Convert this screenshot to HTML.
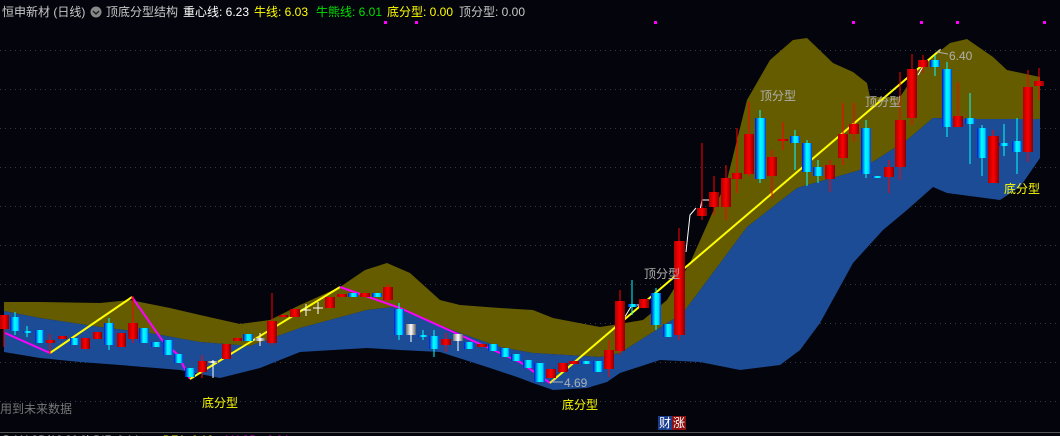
<!DOCTYPE html><html><head><meta charset="utf-8"><style>
html,body{margin:0;padding:0;background:#04040c;width:1060px;height:436px;overflow:hidden}
svg{display:block}
text{font-family:"Liberation Sans","Noto Sans CJK SC",sans-serif}
</style></head><body>
<svg width="1060" height="436" viewBox="0 0 1060 436" xmlns="http://www.w3.org/2000/svg">
<defs>
<linearGradient id="r" x1="0" x2="1"><stop offset="0" stop-color="#b00000"/><stop offset=".5" stop-color="#ff0000"/><stop offset="1" stop-color="#8a0000"/></linearGradient>
<linearGradient id="c" x1="0" x2="1"><stop offset="0" stop-color="#0010d0"/><stop offset=".45" stop-color="#00ffff"/><stop offset=".75" stop-color="#00e0ff"/><stop offset="1" stop-color="#0030e0"/></linearGradient>
<linearGradient id="w" x1="0" x2="1"><stop offset="0" stop-color="#707070"/><stop offset=".5" stop-color="#ffffff"/><stop offset="1" stop-color="#606060"/></linearGradient>
</defs>
<rect width="1060" height="436" fill="#04040c"/>
<!-- grid -->
<g stroke="#3a3a44" stroke-dasharray="1 4" stroke-width="1">
<line x1="0" y1="50.5" x2="1060" y2="50.5"/><line x1="0" y1="89.5" x2="1060" y2="89.5"/><line x1="0" y1="128.5" x2="1060" y2="128.5"/><line x1="0" y1="167.5" x2="1060" y2="167.5"/><line x1="0" y1="206.5" x2="1060" y2="206.5"/><line x1="0" y1="245.5" x2="1060" y2="245.5"/><line x1="0" y1="284.5" x2="1060" y2="284.5"/><line x1="0" y1="323.5" x2="1060" y2="323.5"/><line x1="0" y1="362.5" x2="1060" y2="362.5"/><line x1="0" y1="401.5" x2="1060" y2="401.5"/>
</g>
<!-- olive band -->
<polygon fill="#655c00" points="4,302 40,302 100,303 130,300 170,308 200,315 240,324 270,320 300,305 340,287 365,270 387,263 410,273 440,300 460,305 500,308 533,310 553,318 600,327 613,325 643,320 667,300 690,263 727,180 747,100 770,60 793,40 807,38 833,63 853,72 867,83 870,97 900,97 920,67 950,43 967,39 993,57 1007,70 1040,77 1040,119 967,119 933,118 907,140 860,170 797,188 747,227 683,313 620,353 600,357 533,353 500,347 460,333 393,307 367,310 300,328 250,346 200,342 150,333 100,327 40,318 4,311"/>
<!-- blue band -->
<polygon fill="#1d4c96" points="4,311 40,318 100,327 150,333 200,342 250,346 300,328 367,310 393,307 460,333 500,347 533,353 600,357 620,353 683,313 747,227 797,188 860,170 907,140 933,118 967,119 1040,119 1040,158 1020,187 1000,200 947,193 933,187 907,210 883,230 853,263 820,323 800,350 780,365 740,370 700,362 660,360 620,373 607,382 587,388 553,390 533,383 517,377 487,367 440,352 400,350 367,348 300,352 260,368 220,378 180,370 120,365 80,362 40,358 4,352"/>
<!-- zigzag lines -->
<polyline fill="none" stroke="#ff00ff" stroke-width="2" points="5,333 50,353"/>
<polyline fill="none" stroke="#ffff00" stroke-width="2" points="50,353 132,297"/>
<polyline fill="none" stroke="#ff00ff" stroke-width="2" points="132,297 162,340 178,355 190,379"/>
<polyline fill="none" stroke="#ffff00" stroke-width="2" points="190,379 340,287"/>
<polyline fill="none" stroke="#ff00ff" stroke-width="2" points="340,287 400,308 460,335 520,362 550,383"/>
<polyline fill="none" stroke="#ffff00" stroke-width="2" points="550,383 940,50"/>
<g stroke="#fff" stroke-width="1" fill="none">
<polyline points="623,320 632,305 640,305"/><polyline points="686,252 690,215 696,208"/><polyline points="700,210 702,200 710,200"/><polyline points="918,75 925,63"/>
</g>
<!-- candles -->
<g stroke-width="1">
<g stroke="#ff0000"><line x1="4" y1="315" x2="4" y2="347"/><line x1="50" y1="334" x2="50" y2="354"/><line x1="133" y1="296" x2="133" y2="343"/><line x1="202" y1="355" x2="202" y2="378"/><line x1="272" y1="293" x2="272" y2="345"/><line x1="388" y1="284" x2="388" y2="302"/><line x1="446" y1="333" x2="446" y2="352"/><line x1="609" y1="340" x2="609" y2="377"/><line x1="620" y1="290" x2="620" y2="355"/><line x1="679" y1="228" x2="679" y2="340"/><line x1="702" y1="143" x2="702" y2="220"/><line x1="714" y1="176" x2="714" y2="215"/><line x1="726" y1="165" x2="726" y2="220"/><line x1="737" y1="128" x2="737" y2="193"/><line x1="749" y1="102" x2="749" y2="176"/><line x1="772" y1="150" x2="772" y2="198"/><line x1="783" y1="122" x2="783" y2="150"/><line x1="830" y1="160" x2="830" y2="192"/><line x1="843" y1="103" x2="843" y2="165"/><line x1="854" y1="103" x2="854" y2="142"/><line x1="889" y1="160" x2="889" y2="193"/><line x1="900" y1="72" x2="900" y2="180"/><line x1="912" y1="54" x2="912" y2="125"/><line x1="923" y1="55" x2="923" y2="73"/><line x1="958" y1="82" x2="958" y2="127"/><line x1="993" y1="130" x2="993" y2="183"/><line x1="1028" y1="70" x2="1028" y2="162"/><line x1="1039" y1="68" x2="1039" y2="100"/></g>
<g stroke="#00ffff"><line x1="15" y1="312" x2="15" y2="335"/><line x1="27" y1="326" x2="27" y2="337"/><line x1="109" y1="318" x2="109" y2="350"/><line x1="399" y1="303" x2="399" y2="340"/><line x1="423" y1="330" x2="423" y2="340"/><line x1="434" y1="330" x2="434" y2="357"/><line x1="632" y1="280" x2="632" y2="315"/><line x1="656" y1="288" x2="656" y2="330"/><line x1="760" y1="110" x2="760" y2="183"/><line x1="795" y1="130" x2="795" y2="170"/><line x1="807" y1="140" x2="807" y2="186"/><line x1="818" y1="160" x2="818" y2="183"/><line x1="866" y1="120" x2="866" y2="178"/><line x1="935" y1="55" x2="935" y2="76"/><line x1="947" y1="62" x2="947" y2="137"/><line x1="970" y1="93" x2="970" y2="164"/><line x1="982" y1="125" x2="982" y2="176"/><line x1="1004" y1="124" x2="1004" y2="156"/><line x1="1017" y1="118" x2="1017" y2="174"/></g>
</g>
<g fill="url(#r)">
<rect x="0" y="315" width="9" height="14"/><rect x="46" y="340" width="9" height="3"/><rect x="58" y="336" width="9" height="3"/><rect x="81" y="338" width="9" height="11"/><rect x="93" y="332" width="9" height="7"/><rect x="117" y="333" width="9" height="14"/><rect x="128" y="323" width="10" height="16"/><rect x="198" y="361" width="9" height="11"/><rect x="222" y="344" width="9" height="15"/><rect x="233" y="338" width="9" height="3"/><rect x="267" y="321" width="10" height="22"/><rect x="279" y="315" width="9" height="2"/><rect x="290" y="309" width="10" height="8"/><rect x="325" y="297" width="10" height="11"/><rect x="337" y="294" width="10" height="3"/><rect x="360" y="293" width="10" height="4"/><rect x="383" y="287" width="10" height="13"/><rect x="441" y="339" width="10" height="6"/><rect x="477" y="344" width="10" height="3"/><rect x="546" y="369" width="10" height="9"/><rect x="558" y="363" width="10" height="9"/><rect x="569" y="361" width="10" height="3"/><rect x="604" y="350" width="10" height="19"/><rect x="615" y="301" width="10" height="50"/><rect x="639" y="299" width="10" height="9"/><rect x="674" y="241" width="11" height="94"/><rect x="697" y="208" width="10" height="8"/><rect x="709" y="192" width="10" height="15"/><rect x="721" y="178" width="10" height="29"/><rect x="732" y="173" width="10" height="6"/><rect x="744" y="134" width="10" height="40"/><rect x="767" y="157" width="10" height="19"/><rect x="778" y="139" width="10" height="2"/><rect x="825" y="165" width="10" height="14"/><rect x="838" y="134" width="10" height="24"/><rect x="849" y="124" width="10" height="10"/><rect x="884" y="167" width="10" height="10"/><rect x="895" y="120" width="11" height="47"/><rect x="907" y="69" width="10" height="49"/><rect x="918" y="60" width="10" height="7"/><rect x="953" y="116" width="10" height="11"/><rect x="988" y="136" width="11" height="47"/><rect x="1023" y="87" width="10" height="65"/><rect x="1034" y="81" width="10" height="5"/>
</g>
<g fill="url(#c)">
<rect x="10" y="317" width="10" height="14"/><rect x="23" y="331" width="9" height="2"/><rect x="35" y="330" width="9" height="13"/><rect x="70" y="338" width="9" height="7"/><rect x="104" y="323" width="10" height="22"/><rect x="139" y="328" width="10" height="15"/><rect x="151" y="342" width="10" height="5"/><rect x="163" y="340" width="10" height="15"/><rect x="174" y="354" width="9" height="9"/><rect x="185" y="368" width="10" height="9"/><rect x="243" y="334" width="10" height="7"/><rect x="348" y="293" width="10" height="4"/><rect x="372" y="293" width="10" height="4"/><rect x="394" y="309" width="10" height="26"/><rect x="418" y="335" width="10" height="2"/><rect x="429" y="336" width="10" height="13"/><rect x="464" y="342" width="10" height="7"/><rect x="488" y="344" width="10" height="7"/><rect x="500" y="348" width="10" height="9"/><rect x="511" y="354" width="10" height="7"/><rect x="523" y="360" width="10" height="8"/><rect x="534" y="363" width="11" height="19"/><rect x="581" y="361" width="10" height="3"/><rect x="593" y="361" width="10" height="11"/><rect x="628" y="304" width="9" height="3"/><rect x="651" y="293" width="10" height="32"/><rect x="663" y="324" width="10" height="13"/><rect x="755" y="118" width="11" height="61"/><rect x="790" y="136" width="10" height="7"/><rect x="802" y="143" width="10" height="29"/><rect x="813" y="167" width="10" height="9"/><rect x="861" y="128" width="10" height="46"/><rect x="872" y="176" width="10" height="2"/><rect x="930" y="60" width="10" height="7"/><rect x="942" y="69" width="10" height="58"/><rect x="965" y="118" width="10" height="6"/><rect x="977" y="128" width="10" height="30"/><rect x="999" y="143" width="10" height="3"/><rect x="1012" y="141" width="10" height="11"/>
</g>
<g stroke="#fff"><line x1="306" y1="304" x2="306" y2="316"/><line x1="301" y1="310" x2="311" y2="310"/><line x1="318" y1="302" x2="318" y2="314"/><line x1="313" y1="308" x2="323" y2="308"/><line x1="213" y1="360" x2="213" y2="378"/><line x1="260" y1="333" x2="260" y2="346"/><line x1="458" y1="334" x2="458" y2="351"/><line x1="411" y1="324" x2="411" y2="342"/></g>
<g fill="url(#w)"><rect x="208" y="361" width="10" height="2"/><rect x="255" y="338" width="10" height="3"/><rect x="406" y="324" width="10" height="11"/><rect x="453" y="334" width="10" height="7"/></g>
<!-- labels -->
<g font-size="12">
<text x="202" y="407" fill="#ffff00">底分型</text>
<text x="562" y="409" fill="#ffff00">底分型</text>
<text x="1004" y="193" fill="#ffff00">底分型</text>
<text x="760" y="100" fill="#b0b0b0">顶分型</text>
<text x="865" y="106" fill="#b0b0b0">顶分型</text>
<text x="644" y="278" fill="#b0b0b0">顶分型</text>
<text x="949" y="60" fill="#b0b0b0">6.40</text>
<text x="564" y="387" fill="#b0b0b0">4.69</text>
<text x="0" y="413" fill="#777">用到未来数据</text>
</g>
<g stroke="#b0b0b0" fill="none"><polyline points="948,54 937,52 941,49"/><polyline points="563,382 552,382 556,379"/></g>
<!-- magenta markers -->
<g fill="#ff00ff"><rect x="384" y="21" width="3" height="3"/><rect x="415" y="21" width="3" height="3"/><rect x="654" y="21" width="3" height="3"/><rect x="852" y="21" width="3" height="3"/><rect x="920" y="21" width="3" height="3"/><rect x="956" y="21" width="3" height="3"/><rect x="1043" y="21" width="3" height="3"/></g>
<!-- header -->
<g font-size="12">
<text x="2" y="16" fill="#c8c8c8">恒申新材 (日线)</text>
<circle cx="96" cy="12" r="5.5" fill="#888"/><polyline points="93,11 96,14 99,11" fill="none" stroke="#222" stroke-width="1.5"/>
<text x="106" y="16" fill="#c8c8c8">顶底分型结构</text>
<text x="183" y="16" fill="#ffffff">重心线: 6.23</text>
<text x="254" y="16" fill="#ffff00">牛线: 6.03</text>
<text x="316" y="16" fill="#00e000">牛熊线: 6.01</text>
<text x="387" y="16" fill="#ffff00">底分型: 0.00</text>
<text x="459" y="16" fill="#c8c8c8">顶分型: 0.00</text>
</g>
<!-- bottom -->
<rect x="658" y="416" width="14" height="14" fill="#1a3c8c"/><rect x="672" y="416" width="14" height="14" fill="#8c1010"/>
<text x="659" y="427" font-size="12" fill="#fff">财</text><text x="673" y="427" font-size="12" fill="#fff">涨</text>
<line x1="0" y1="432.5" x2="1060" y2="432.5" stroke="#555"/>
<circle cx="6" cy="439" r="4" fill="#888"/>
<g font-size="11"><text x="14" y="443" fill="#c8c8c8">MACD(12,26,9) DIF: 0.14</text><text x="163" y="443" fill="#ffff00">DEA: 0.16</text><text x="225" y="443" fill="#ff00ff">MACD: -0.04</text></g>
</svg>
</body></html>
